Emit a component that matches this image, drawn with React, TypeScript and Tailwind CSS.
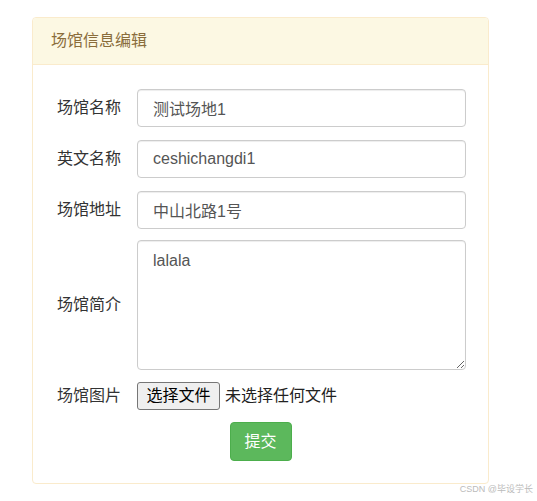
import React from "react";

const font = { fontFamily: '"Liberation Sans", Arial, "Noto Sans CJK SC", sans-serif' };

function Row({ label, children, className = "" }: { label: string; children: React.ReactNode; className?: string }) {
  return (
    <div className={`flex items-center ${className}`}>
      <div className="w-[80px] shrink-0 text-[16px] text-[#333]">{label}</div>
      {children}
    </div>
  );
}

const inputCls =
  "w-[329px] h-[38px] border border-[#ccc] rounded-[4px] px-[15px] text-[16px] text-[#555] shadow-[inset_0_1px_1px_rgba(0,0,0,0.075)] outline-none bg-white";

export default function App() {
  return (
    <div className="relative w-[537px] h-[501px] bg-white" style={font}>
      <div className="pt-[17px] pl-[32px]">
        <div className="w-[457px] border border-[#faebcc] rounded-[4px] bg-white">
          <div className="h-[47px] bg-[#fcf8e3] border-b border-[#faebcc] rounded-t-[4px] flex items-center pl-[18px] text-[16px] text-[#8a6d3b]">
            场馆信息编辑
          </div>
          <div className="pl-[24px] pt-[24px] pb-[22px] flex flex-col">
            <Row label="场馆名称">
              <input className={inputCls} defaultValue="测试场地1" />
            </Row>
            <Row label="英文名称" className="mt-[13px]">
              <input className={inputCls} defaultValue="ceshichangdi1" />
            </Row>
            <Row label="场馆地址" className="mt-[13px]">
              <input className={inputCls} defaultValue="中山北路1号" />
            </Row>
            <Row label="场馆简介" className="mt-[11px]">
              <textarea
                className="w-[329px] h-[130px] border border-[#ccc] rounded-[4px] px-[15px] py-[8px] text-[16px] text-[#555] shadow-[inset_0_1px_1px_rgba(0,0,0,0.075)] outline-none bg-white"
                defaultValue="lalala"
              />
            </Row>
            <Row label="场馆图片" className="mt-[12px]">
              <div className="flex items-center text-[16px] text-black">
                <span className="h-[28px] w-[83px] flex items-center justify-center border border-[#767676] rounded-[3px] bg-[#efefef]">
                  选择文件
                </span>
                <span className="ml-[5px] text-[#222]">未选择任何文件</span>
              </div>
            </Row>
            <div className="flex justify-center pr-[24px] mt-[12px]">
              <button className="w-[62px] h-[39px] bg-[#5cb85c] border border-[#4cae4c] rounded-[4px] text-white text-[16px]">
                提交
              </button>
            </div>
          </div>
        </div>
      </div>
      <div className="absolute right-[4px] bottom-[5px] text-[9px] text-[#bbb]">CSDN @毕设学长</div>
    </div>
  );
}
